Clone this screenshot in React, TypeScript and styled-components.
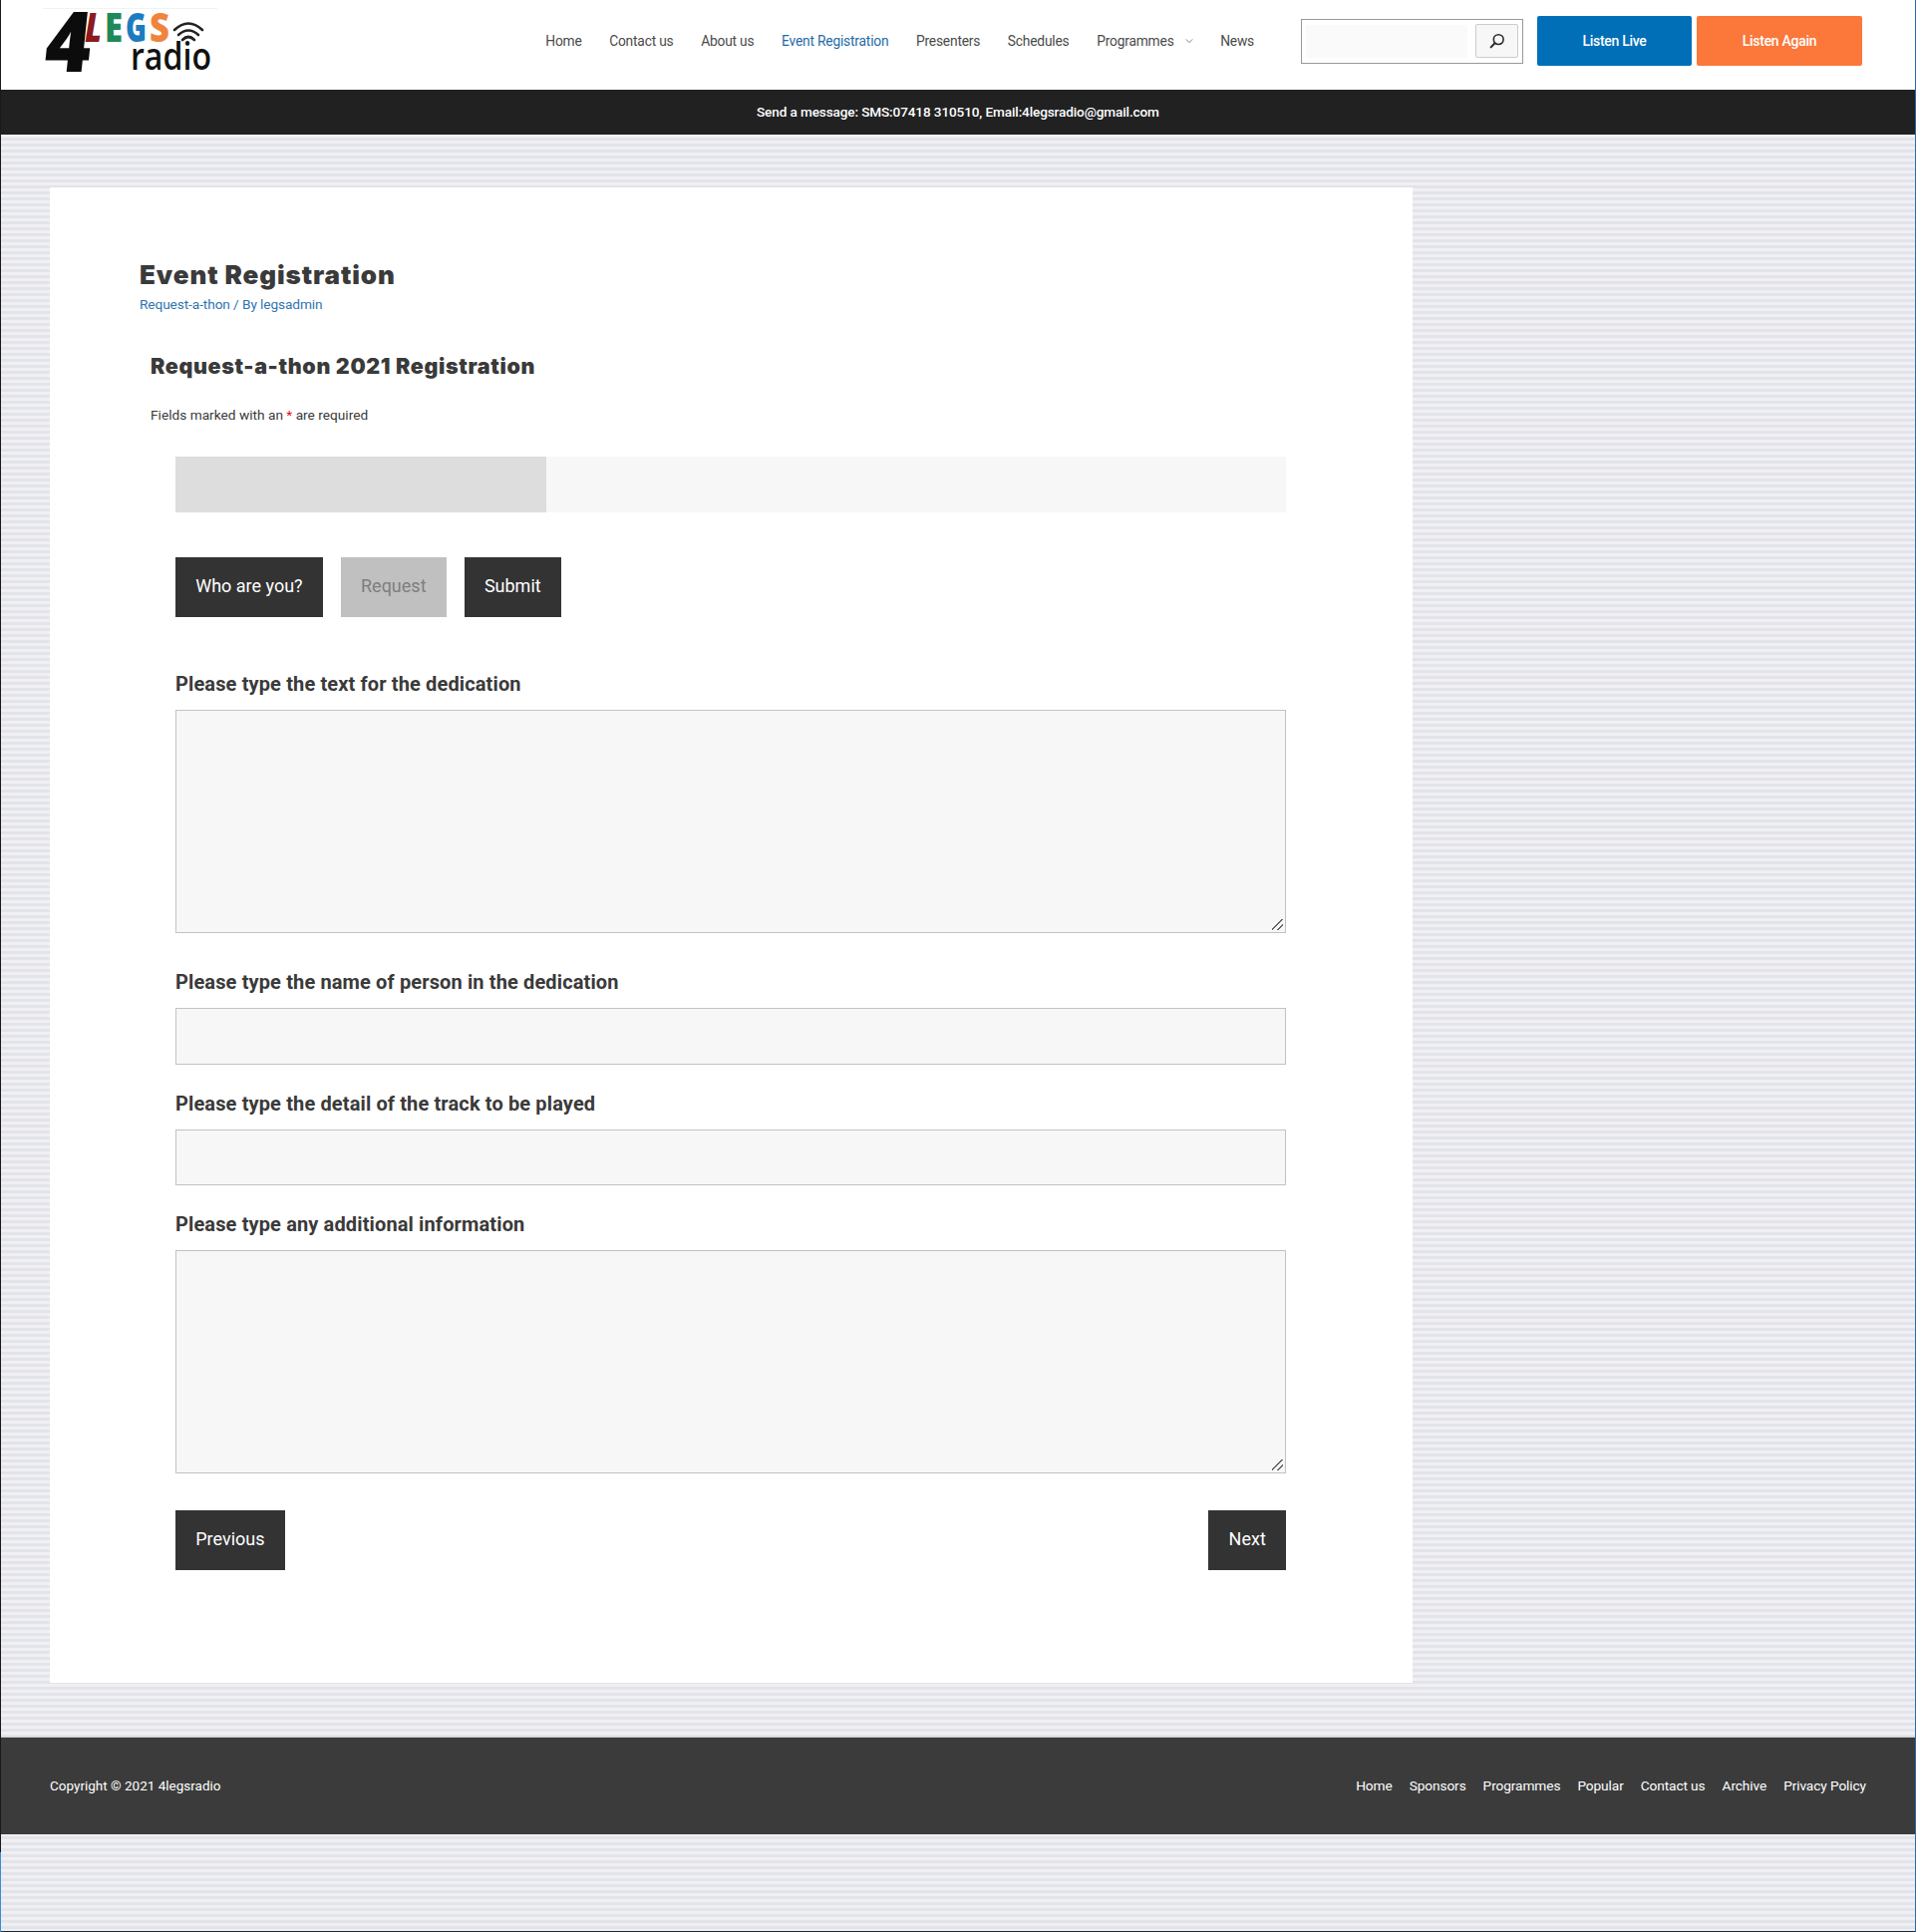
import React from 'react'
import styled, { createGlobalStyle } from 'styled-components'

const Global = createGlobalStyle`
  html, body { margin: 0; padding: 0; }
  body { font-family: Roboto, "Liberation Sans", sans-serif; color: #3a3a3a; }
  * { box-sizing: border-box; }
`

const Logo = () => (
  <LogoSvg viewBox="0 0 175 70" width="175" height="70" aria-label="4 Legs Radio">
    <line x1="0" y1="0.5" x2="175" y2="0.5" stroke="#f2f2f2" />
    <LogoText transform="translate(0 64) skewX(-6)" x="0" y="0" $size={84} $weight={800} fill="#0c0c0c" textLength="46" lengthAdjust="spacingAndGlyphs">4</LogoText>
    <LogoText x="42" y="34" $size={40} $weight={800} $italic fill="#8e1a1c" textLength="17" lengthAdjust="spacingAndGlyphs">L</LogoText>
    <LogoText x="62" y="34" $size={40} $weight={800} fill="#1f8a58" textLength="18" lengthAdjust="spacingAndGlyphs">E</LogoText>
    <LogoText x="83" y="34" $size={40} $weight={800} fill="#1d7cc0" textLength="21" lengthAdjust="spacingAndGlyphs">G</LogoText>
    <LogoText x="107" y="34" $size={40} $weight={800} fill="#f0843c" textLength="20" lengthAdjust="spacingAndGlyphs">S</LogoText>
    <LogoText x="88" y="62" $size={37} $weight={600} fill="#111" textLength="81" lengthAdjust="spacingAndGlyphs">radio</LogoText>
    <g fill="none" stroke="#222" strokeWidth="2.6" strokeLinecap="round">
      <path d="M132 22 Q146 9 160 22" />
      <path d="M136 27 Q146 18 156 27" />
      <path d="M140 32 Q146 26 152 32" />
    </g>
  </LogoSvg>
)

const SearchIcon = () => (
  <svg viewBox="0 0 16 16" width="16" height="16" fill="none" stroke="#2b2b2b">
    <circle cx="9.2" cy="6.6" r="4.9" strokeWidth="1.6" />
    <line x1="5.6" y1="10.2" x2="1.6" y2="14.4" strokeWidth="2" strokeLinecap="round" />
  </svg>
)

const Chevron = () => (
  <svg viewBox="0 0 10 10" width="8" height="8" fill="none" stroke="#666" strokeWidth="1">
    <path d="M1 3 L5 7 L9 3" />
  </svg>
)

const navItems = ['Home', 'Contact us', 'About us', 'Event Registration', 'Presenters', 'Schedules', 'Programmes', 'News']
const footerLinks = ['Home', 'Sponsors', 'Programmes', 'Popular', 'Contact us', 'Archive', 'Privacy Policy']

export default function App() {
  return (
    <Frame>
      <Global />
      <Header>
        <Logo />
        <Nav>
          {navItems.map(item => (
            <NavLink key={item} $active={item === 'Event Registration'}>
              {item}
              {item === 'Programmes' && <Chevron />}
            </NavLink>
          ))}
        </Nav>
        <SearchBox>
          <SearchField />
          <SearchButton><SearchIcon /></SearchButton>
        </SearchBox>
        <ListenButton $bg="#006fb8" $width={155} $gap={14}>Listen Live</ListenButton>
        <ListenButton $bg="#fb773a" $width={166} $gap={5}>Listen Again</ListenButton>
      </Header>
      <MessageBar>Send a message: SMS:07418 310510, Email:4legsradio@gmail.com</MessageBar>
      <Main>
        <Card>
          <PageTitle>Event Registration</PageTitle>
          <Meta>Request-a-thon / By legsadmin</Meta>
          <FormIntro>
            <FormTitle>Request-a-thon 2021 Registration</FormTitle>
            <Required>Fields marked with an <Star>*</Star> are required</Required>
          </FormIntro>
          <FormBody>
            <Progress><ProgressFill style={{ width: `${(372 / 1114) * 100}%` }} /></Progress>
            <Steps>
              <DarkButton>Who are you?</DarkButton>
              <DisabledButton>Request</DisabledButton>
              <DarkButton>Submit</DarkButton>
            </Steps>
            <Label>Please type the text for the dedication</Label>
            <TextArea />
            <Label>Please type the name of person in the dedication</Label>
            <TextInput />
            <Label>Please type the detail of the track to be played</Label>
            <TextInput />
            <Label>Please type any additional information</Label>
            <TextArea />
            <Pager>
              <DarkButton>Previous</DarkButton>
              <DarkButton>Next</DarkButton>
            </Pager>
          </FormBody>
        </Card>
      </Main>
      <Footer>
        <Copyright>Copyright © 2021 4legsradio</Copyright>
        <FooterNav>
          {footerLinks.map(link => <FooterLink key={link}>{link}</FooterLink>)}
        </FooterNav>
      </Footer>
      <BottomFill />
    </Frame>
  )
}

const Frame = styled.div`
  width: 1922px;
  height: 1938px;
  padding: 0 1px 1px 1px;
  background:
    linear-gradient(#3a8fd0, #3a8fd0) left 1858px / 1px 80px no-repeat,
    linear-gradient(#1a1a1a, #1a1a1a) left top / 1px 1858px no-repeat,
    linear-gradient(#1f6fb0, #1f6fb0) right top / 1px 100% no-repeat,
    linear-gradient(#1a2a33, #1a2a33) left bottom / 100% 1px no-repeat,
    repeating-linear-gradient(to bottom, #e3e4ea 0, #e3e4ea 3px, #f0f0f4 3px, #f0f0f4 6px);
`

const Header = styled.header`
  height: 90px;
  background: #fff;
  display: flex;
  align-items: center;
  padding: 0 53px 8px 42px;
`

const LogoSvg = styled.svg`
  flex: none;
  margin-top: 8px;
  align-self: flex-start;
`

const LogoText = styled.text<{ $size: number; $weight: number; $italic?: boolean }>`
  font-family: "Open Sans", sans-serif;
  font-size: ${p => p.$size}px;
  font-weight: ${p => p.$weight};
  font-style: ${p => (p.$italic ? 'italic' : 'normal')};
`

const Nav = styled.nav`
  display: flex;
  align-items: center;
  margin-left: auto;
  gap: 27.6px;
`

const NavLink = styled.a<{ $active?: boolean }>`
  display: flex;
  align-items: center;
  gap: 11px;
  font-size: 13.8px;
  letter-spacing: -0.2px;
  color: ${p => (p.$active ? '#1f6ca8' : '#4b4b4b')};
  white-space: nowrap;
`

const SearchBox = styled.div`
  width: 223px;
  height: 45px;
  margin-left: 47px;
  border: 1px solid #999;
  background: #fff;
  display: flex;
  align-items: center;
  justify-content: space-between;
  padding: 0 4px;
`

const SearchField = styled.div`
  width: 162px;
  height: 33px;
  background: #fafafa;
`

const SearchButton = styled.div`
  width: 43px;
  height: 34px;
  border: 1px solid #ccc;
  border-radius: 2px;
  background: #f7f7f7;
  display: flex;
  align-items: center;
  justify-content: center;
`

const ListenButton = styled.a<{ $bg: string; $width: number; $gap: number }>`
  width: ${p => p.$width}px;
  height: 50px;
  margin-left: ${p => p.$gap}px;
  border-radius: 2px;
  background: ${p => p.$bg};
  color: #fff;
  font-size: 14px;
  font-weight: 500;
  letter-spacing: -0.3px;
  display: flex;
  align-items: center;
  justify-content: center;
`

const MessageBar = styled.div`
  height: 45px;
  background: #212122;
  color: #fff;
  font-size: 13.6px;
  font-weight: 500;
  letter-spacing: -0.13px;
  display: flex;
  align-items: center;
  padding: 0 0 2px 758px;
`

const Main = styled.main`
  padding: 53px 0 54px 49px;
`

const Card = styled.article`
  width: 1367px;
  height: 1500px;
  background: #fff;
  padding: 73px 0 0 90px;
`

const PageTitle = styled.h1`
  margin: 0;
  font-family: Inter, sans-serif;
  font-size: 26px;
  line-height: 30px;
  font-weight: 900;
  letter-spacing: 0.9px;
  color: #3a3a3a;
`

const Meta = styled.div`
  margin-top: 4px;
  font-size: 13.7px;
  line-height: 20px;
  letter-spacing: -0.1px;
  color: #2f74b0;
`

const FormIntro = styled.div`
  padding: 39px 0 0 11px;
`

const FormTitle = styled.h2`
  margin: 0;
  font-family: Inter, sans-serif;
  font-size: 21.5px;
  line-height: 26px;
  font-weight: 900;
  letter-spacing: 0.62px;
  color: #3a3a3a;
`

const Required = styled.p`
  margin: 26px 0 0;
  font-size: 13.7px;
  line-height: 20px;
  color: #3a3a3a;
`

const Star = styled.span`
  color: #e0102a;
`

const FormBody = styled.form`
  width: 1114px;
  margin: 32px 0 0 36px;
  display: flex;
  flex-direction: column;
`

const Progress = styled.div`
  height: 56px;
  background: #f7f7f7;
`

const ProgressFill = styled.div`
  height: 100%;
  background: #dddddd;
`

const Steps = styled.div`
  display: flex;
  gap: 18px;
  margin: 45px 0 49px;
`

const DarkButton = styled.div`
  height: 60px;
  padding: 0 20.2px 3px;
  background: #333;
  color: #fff;
  font-size: 18px;
  display: flex;
  align-items: center;
`

const DisabledButton = styled(DarkButton)`
  background: #c0c0c0;
  color: #7e7e7e;
`

const Label = styled.label`
  font-size: 20px;
  line-height: 36px;
  font-weight: 700;
  letter-spacing: 0.13px;
  color: #3a3a3a;
  margin-bottom: 8px;
`

const TextArea = styled.div`
  position: relative;
  height: 224px;
  margin-bottom: 31px;
  background: #f7f7f7;
  border: 1px solid #c2c2c2;
  &::after {
    content: '';
    position: absolute;
    right: 2px;
    bottom: 2px;
    width: 11px;
    height: 11px;
    background: linear-gradient(135deg, transparent 45%, #666 45%, #666 52%, transparent 52%, transparent 72%, #666 72%, #666 79%, transparent 79%);
  }
`

const TextInput = styled.div`
  height: 56.5px;
  margin-bottom: 21px;
  background: #f7f7f7;
  border: 1px solid #c2c2c2;
`

const Pager = styled.div`
  display: flex;
  justify-content: space-between;
  margin-top: 6px;
`

const Footer = styled.footer`
  height: 98px;
  background: #3b3b3b;
  border-top: 1px solid #c9c9c9;
  color: #fff;
  display: flex;
  align-items: center;
  justify-content: space-between;
  padding: 0 49px 2px;
`

const Copyright = styled.div`
  font-size: 13.5px;
`

const FooterNav = styled.nav`
  display: flex;
  gap: 17px;
`

const FooterLink = styled.a`
  font-size: 13.7px;
  letter-spacing: -0.1px;
  color: #fff;
`

const BottomFill = styled.div`
  height: 97px;
`
